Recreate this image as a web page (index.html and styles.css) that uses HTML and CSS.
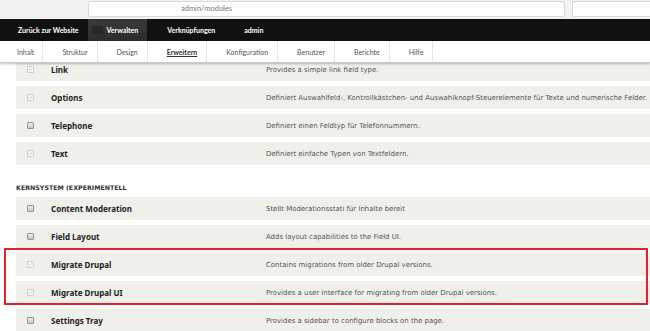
FILE: index.html
```html
<!DOCTYPE html>
<html lang="de">
<head>
<meta charset="utf-8">
<title>Erweitern</title>
<link rel="stylesheet" href="styles.css">
</head>
<body>
<header class="top">
  <div class="browserbar">
    <div class="url">admin/modules</div>
    <div class="search"></div>
  </div>
  <nav class="toolbar">
    <a class="tb-item">Zurück zur Website</a>
    <a class="tb-item tb-active"><span class="tb-icon"></span>Verwalten</a>
    <a class="tb-item">Verknüpfungen</a>
    <a class="tb-item">admin</a>
  </nav>
  <nav class="tray">
    <a class="tr-item first">Inhalt</a>
    <a class="tr-item">Struktur</a>
    <a class="tr-item">Design</a>
    <a class="tr-item current">Erweitern</a>
    <a class="tr-item">Konfiguration</a>
    <a class="tr-item">Benutzer</a>
    <a class="tr-item">Berichte</a>
    <a class="tr-item">Hilfe</a>
  </nav>
</header>

<main class="content">
  <div class="group">
    <div class="row"><span class="cell-cb"><span class="cb checked"></span></span><span class="name">Link</span><span class="desc">Provides a simple link field type.</span></div>
    <div class="row"><span class="cell-cb"><span class="cb checked"></span></span><span class="name">Options</span><span class="desc">Definiert Auswahlfeld-, Kontrollkästchen- und Auswahlknopf-Steuerelemente für Texte und numerische Felder.</span></div>
    <div class="row"><span class="cell-cb"><span class="cb"></span></span><span class="name">Telephone</span><span class="desc">Definiert einen Feldtyp für Telefonnummern.</span></div>
    <div class="row"><span class="cell-cb"><span class="cb checked"></span></span><span class="name">Text</span><span class="desc">Definiert einfache Typen von Textfeldern.</span></div>
  </div>

  <h2 class="section">KERNSYSTEM (EXPERIMENTELL</h2>

  <div class="group">
    <div class="row"><span class="cell-cb"><span class="cb"></span></span><span class="name">Content Moderation</span><span class="desc">Stellt Moderationsstati für Inhalte bereit</span></div>
    <div class="row"><span class="cell-cb"><span class="cb"></span></span><span class="name">Field Layout</span><span class="desc">Adds layout capabilities to the Field UI.</span></div>
    <div class="highlight">
      <div class="row"><span class="cell-cb"><span class="cb checked"></span></span><span class="name">Migrate Drupal</span><span class="desc">Contains migrations from older Drupal versions.</span></div>
      <div class="row"><span class="cell-cb"><span class="cb checked"></span></span><span class="name">Migrate Drupal UI</span><span class="desc">Provides a user interface for migrating from older Drupal versions.</span></div>
    </div>
    <div class="row"><span class="cell-cb"><span class="cb"></span></span><span class="name">Settings Tray</span><span class="desc">Provides a sidebar to configure blocks on the page.</span></div>
  </div>
</main>
</body>
</html>
```

FILE: styles.css
```css
* { box-sizing: border-box; }
html, body { margin: 0; padding: 0; }
body {
  width: 650px;
  height: 331px;
  overflow: hidden;
  background: #fff;
  font-family: "DejaVu Sans", sans-serif;
}

.top {
  position: relative;
  z-index: 2;
}

.browserbar {
  height: 19px;
  background: #f2f2f2;
  display: flex;
  padding: 1px 0 0 88px;
  gap: 7px;
}
.url {
  width: 477px;
  height: 16px;
  background: #fff;
  border: 1px solid #d8d8d8;
  border-radius: 2px;
  font-family: "Lato", sans-serif;
  font-size: 7.5px;
  line-height: 14px;
  color: #777;
  padding-left: 92px;
}
.search {
  flex: 1;
  height: 16px;
  background: #fff;
  border: 1px solid #d8d8d8;
  border-right: 0;
  border-radius: 2px 0 0 2px;
}

.toolbar {
  height: 22px;
  background: #111;
  display: flex;
  font-family: "Lato", sans-serif;
  font-weight: 700;
  font-size: 7px;
  color: #fff;
}
.tb-item {
  display: flex;
  align-items: center;
  padding: 0 9px 0 18px;
}
.tb-item + .tb-item { padding-left: 20px; }
.tb-item.tb-active {
  padding-left: 4px;
  background: linear-gradient(#3a3a3a, #2c2c2c);
}
.tb-icon {
  width: 11px;
  height: 8px;
  background: #262626;
  margin-right: 4px;
}

.tray {
  height: 22px;
  background: #fff;
  display: flex;
  border-bottom: 1px solid #c8c8c8;
  box-shadow: 0 1px 2px rgba(0, 0, 0, 0.25);
  font-family: "Lato", sans-serif;
  font-size: 7px;
  color: #555;
}
.tr-item {
  display: flex;
  align-items: center;
  padding: 0 9px 0 19px;
  border-right: 1px solid #e6e6e6;
}
.tr-item.first { padding-left: 17px; padding-right: 8px; }
.tr-item.current {
  font-weight: 700;
  color: #333;
  text-decoration: underline;
}

.content {
  margin-top: -5px;
  padding-left: 16px;
}

.group {
  display: flex;
  flex-direction: column;
  gap: 5px;
}

.row {
  height: 23px;
  background: #f0f0eb;
  display: grid;
  grid-template-columns: 35px 215px 1fr;
  align-items: center;
  white-space: nowrap;
}
.cell-cb {
  display: flex;
  padding-left: 11px;
}
.cb {
  width: 7px;
  height: 7px;
  border: 1px solid #979797;
  border-radius: 1px;
  background: linear-gradient(#ececec, #c6c6c6);
}
.cb.checked {
  border-color: #cfcfcf;
  background: #f7f7f7 url("data:image/svg+xml,%3Csvg xmlns='http://www.w3.org/2000/svg' viewBox='0 0 7 7'%3E%3Cpath d='M1.3 3.6 L2.8 5.1 L5.7 1.6' fill='none' stroke='%23b5b5b5' stroke-width='0.9'/%3E%3C/svg%3E") center / 100% 100% no-repeat;
}
.name {
  font-family: "Noto Sans", "DejaVu Sans", sans-serif;
  font-weight: 700;
  font-size: 8px;
  color: #222;
}
.desc {
  font-size: 6.95px;
  color: #555;
}

.section {
  margin: 0;
  padding: 19px 0 0 0;
  margin-bottom: 5px;
  font-size: 6.3px;
  line-height: 8px;
  font-weight: 700;
  color: #333;
}

.highlight {
  position: relative;
  display: flex;
  flex-direction: column;
  gap: 5px;
}
.highlight::after {
  content: "";
  position: absolute;
  left: -12px;
  top: -5px;
  right: 2px;
  bottom: -1px;
  border: 2px solid #e8202a;
  pointer-events: none;
}
```
